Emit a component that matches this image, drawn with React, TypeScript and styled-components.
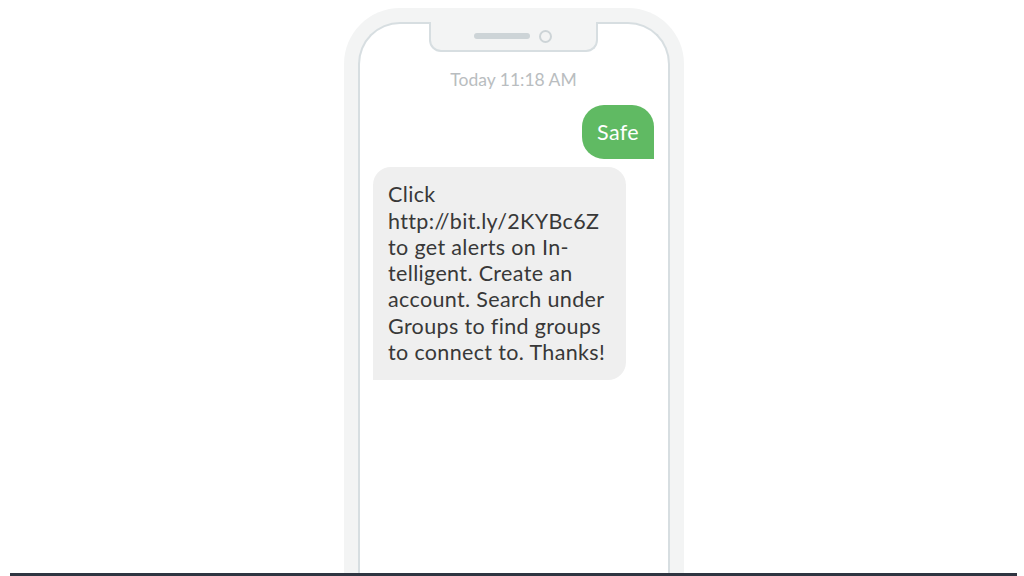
import React from "react";
import styled, { createGlobalStyle } from "styled-components";

const Global = createGlobalStyle`
  html, body { margin: 0; padding: 0; background: #ffffff; }
  body { font-family: "Lato", "Open Sans", sans-serif; }
`;

const Page = styled.div`
  width: 1024px;
  height: 576px;
  display: flex;
  flex-direction: column;
  overflow: hidden;
  padding-top: 8px;
  box-sizing: border-box;
`;

const Stage = styled.div`
  flex: 1;
  display: flex;
  padding-left: 344px;
  overflow: hidden;
`;

const PhoneBody = styled.div`
  width: 340px;
  height: 600px;
  background: #f3f4f4;
  border-radius: 56px 56px 0 0;
  padding: 14px 14px 0;
  box-sizing: border-box;
`;

const Screen = styled.div`
  position: relative;
  height: 100%;
  background: #ffffff;
  border: 2px solid #d7dee1;
  border-bottom: none;
  border-radius: 42px 42px 0 0;
  display: flex;
  flex-direction: column;
  box-sizing: border-box;
  padding: 0 14px 0 13px;
`;

const Notch = styled.div`
  position: absolute;
  top: -2px;
  left: 69px;
  width: 169px;
  height: 30px;
  background: #f3f4f4;
  border: 2px solid #d7dee1;
  border-top: none;
  border-radius: 0 0 12px 12px;
  box-sizing: border-box;
  display: flex;
  align-items: center;
  justify-content: center;
  gap: 9px;
  padding-right: 2px;
`;

const Speaker = styled.div`
  width: 56px;
  height: 6px;
  border-radius: 3px;
  background: #cdd4d7;
`;

const Camera = styled.div`
  width: 9px;
  height: 9px;
  border-radius: 50%;
  border: 2px solid #cdd4d7;
`;

const Timestamp = styled.div`
  margin-top: 45px;
  text-align: center;
  font-size: 17.5px;
  line-height: 22px;
  color: #b9bdc0;
`;

const Row = styled.div<{ $mine?: boolean; $gap: number }>`
  display: flex;
  justify-content: ${(p) => (p.$mine ? "flex-end" : "flex-start")};
  margin-top: ${(p) => p.$gap}px;
`;

const Bubble = styled.div<{ $mine?: boolean }>`
  background: ${(p) => (p.$mine ? "#60ba63" : "#efefef")};
  color: ${(p) => (p.$mine ? "#ffffff" : "#383838")};
  font-size: 21.5px;
  letter-spacing: 0.35px;
  line-height: 26.3px;
  border-radius: ${(p) => (p.$mine ? "22px 22px 0 22px" : "18px 18px 18px 0")};
  padding: ${(p) => (p.$mine ? "14px 15px 14px 15px" : "14px 21px 15px 15px")};
`;

const Line = styled.span`
  display: block;
  white-space: nowrap;
`;

const BaseLine = styled.div`
  height: 3px;
  margin: 0 7px 0 10px;
  background: #2f3541;
  flex-shrink: 0;
`;

const lines = [
  "Click",
  "http://bit.ly/2KYBc6Z",
  "to get alerts on In-",
  "telligent. Create an",
  "account. Search under",
  "Groups to find groups",
  "to connect to. Thanks!",
];

export default function App() {
  return (
    <>
      <Global />
      <Page>
        <Stage>
          <PhoneBody>
            <Screen>
              <Notch>
                <Speaker />
                <Camera />
              </Notch>
              <Timestamp>Today 11:18 AM</Timestamp>
              <Row $mine $gap={14}>
                <Bubble $mine>Safe</Bubble>
              </Row>
              <Row $gap={8}>
                <Bubble>
                  {lines.map((l) => (
                    <Line key={l}>{l}</Line>
                  ))}
                </Bubble>
              </Row>
            </Screen>
          </PhoneBody>
        </Stage>
        <BaseLine />
      </Page>
    </>
  );
}
